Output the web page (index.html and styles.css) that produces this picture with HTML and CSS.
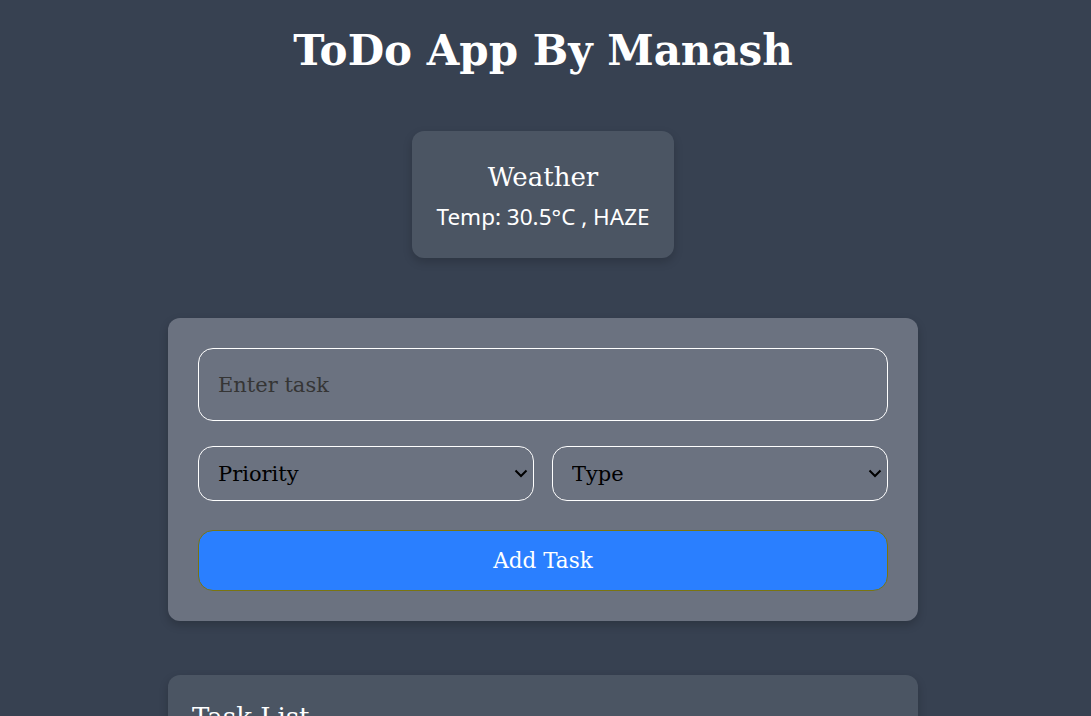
FILE: index.html
```html
<!DOCTYPE html>
<html lang="en">
<head>
<meta charset="utf-8">
<title>ToDo App By Manash</title>
<link rel="stylesheet" href="styles.css">
</head>
<body>
<div class="page">
  <h1 class="title">ToDo App By Manash</h1>

  <section class="weather">
    <h3 class="weather-title">Weather</h3>
    <p class="weather-temp">Temp: 30.5°C , HAZE</p>
  </section>

  <form class="form-card" onsubmit="return false">
    <input class="task-input" type="text" placeholder="Enter task">
    <div class="select-row">
      <div class="select-wrap">
        <select class="select">
          <option>Priority</option>
          <option>High</option>
          <option>Medium</option>
          <option>Low</option>
        </select>
        <svg class="chevron" width="14" height="9" viewBox="0 0 14 9"><path d="M1.5 1.5 L7 7 L12.5 1.5" fill="none" stroke="#000" stroke-width="2"/></svg>
      </div>
      <div class="select-wrap">
        <select class="select">
          <option>Type</option>
          <option>Work</option>
          <option>Personal</option>
        </select>
        <svg class="chevron" width="14" height="9" viewBox="0 0 14 9"><path d="M1.5 1.5 L7 7 L12.5 1.5" fill="none" stroke="#000" stroke-width="2"/></svg>
      </div>
    </div>
    <button class="add-btn" type="submit">Add Task</button>
  </form>

  <section class="list-card">
    <h2 class="list-title">Task List</h2>
  </section>
</div>
</body>
</html>
```

FILE: styles.css
```css
html, body {
  margin: 0;
  padding: 0;
  background: #374151;
}

body {
  font-family: "DejaVu Serif", Georgia, serif;
  color: #ffffff;
}

.page {
  padding: 26px 5px 40px 0;
  display: flex;
  flex-direction: column;
  align-items: center;
}

.title {
  margin: 0;
  font-size: 42px;
  font-weight: bold;
  line-height: 50px;
  color: #ffffff;
}

.weather {
  margin-top: 55px;
  background: #4b5563;
  border-radius: 12px;
  padding: 31px 24px 25px;
  box-shadow: 0 4px 10px rgba(0, 0, 0, 0.18);
  text-align: center;
  width: 214px;
}

.weather-title {
  margin: 0 0 7px;
  font-size: 26px;
  font-weight: normal;
  line-height: 31px;
}

.weather-temp {
  margin: 0;
  font-family: "Noto Sans", "Open Sans", sans-serif;
  font-size: 22.5px;
  line-height: 33px;
  white-space: nowrap;
}

.form-card {
  margin-top: 60px;
  width: 750px;
  box-sizing: border-box;
  background: #6b7280;
  border-radius: 12px;
  padding: 30px;
  box-shadow: 0 4px 10px rgba(0, 0, 0, 0.2);
  display: flex;
  flex-direction: column;
}

.task-input {
  box-sizing: border-box;
  height: 73px;
  width: 100%;
  margin: 0;
  padding: 0 19px;
  background: transparent;
  border: 1px solid #ffffff;
  border-radius: 15px;
  font-family: "DejaVu Serif", Georgia, serif;
  font-size: 21px;
  color: #000;
  outline: none;
}

.task-input::placeholder {
  color: #353535;
  opacity: 1;
}

.select-row {
  margin-top: 25px;
  display: flex;
  gap: 18px;
}

.select-wrap {
  position: relative;
  flex: 1;
}

.select {
  appearance: none;
  -webkit-appearance: none;
  box-sizing: border-box;
  width: 100%;
  height: 55px;
  margin: 0;
  padding: 0 34px 0 19px;
  background: transparent;
  border: 1px solid #ffffff;
  border-radius: 15px;
  font-family: "DejaVu Serif", Georgia, serif;
  font-size: 21px;
  color: #000;
  outline: none;
}

.chevron {
  position: absolute;
  right: 6px;
  top: 23px;
  pointer-events: none;
}

.add-btn {
  margin-top: 29px;
  height: 61px;
  width: 100%;
  box-sizing: border-box;
  background: #2a7fff;
  border: 1px solid #7a7410;
  border-radius: 15px;
  color: #ffffff;
  font-family: "DejaVu Serif", Georgia, serif;
  font-size: 21.5px;
  cursor: pointer;
}

.list-card {
  margin-top: 54px;
  width: 750px;
  box-sizing: border-box;
  background: #4b5563;
  border-radius: 12px;
  padding: 27px 24px;
  box-shadow: 0 4px 10px rgba(0, 0, 0, 0.2);
  min-height: 200px;
}

.list-title {
  margin: 0;
  font-size: 26px;
  font-weight: normal;
  line-height: 31px;
}
```
